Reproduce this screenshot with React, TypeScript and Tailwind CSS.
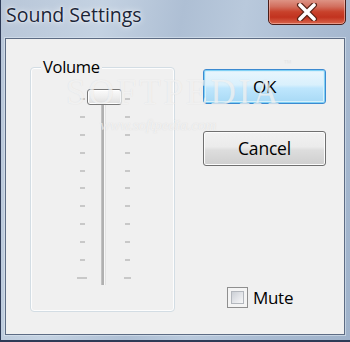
import React from 'react';

const ticks = Array.from({ length: 11 }, (_, i) => i);

function CloseButton() {
  return (
    <div className="absolute left-[267px] top-[-4px] w-[78px] h-[29px] rounded-b-[5px] border border-[#4a1e1a] bg-[linear-gradient(180deg,#e3a496_0%,#d2705f_35%,#c8412b_55%,#c2331f_75%,#d9664d_100%)] shadow-[inset_0_0_0_1px_rgba(255,220,210,0.45)] flex items-center justify-center">
      <svg width="22" height="18" viewBox="0 0 22 18" className="mt-[3px]">
        <path d="M4 2 L18 16 M18 2 L4 16" stroke="#5a2418" strokeWidth="6" strokeLinecap="round" />
        <path d="M4 2 L18 16 M18 2 L4 16" stroke="#ffffff" strokeWidth="3.6" strokeLinecap="round" />
      </svg>
    </div>
  );
}

function Slider() {
  return (
    <div className="relative flex h-[197px] ml-[46px] mt-[21px]">
      {/* left ticks */}
      <div className="flex flex-col justify-between items-center w-[10px] pt-[9px] h-[190px]">
        {ticks.map((i) => (
          <div key={i} className={`h-[2px] bg-[#c8c8c8] ${i === 10 ? 'w-[10px]' : 'w-[5px]'}`} />
        ))}
      </div>
      {/* channel */}
      <div className="ml-[14px] mt-[8px] w-[5px] h-[188px] flex">
        <div className="w-[1px] bg-[#c2c2c2]" />
        <div className="w-[2px] bg-[#b0b0b0]" />
        <div className="w-[2px] bg-[#f7f7f7] border-r border-[#e2e2e2]" />
      </div>
      {/* right ticks */}
      <div className="flex flex-col justify-between items-center w-[7px] ml-[18px] pt-[9px] h-[190px]">
        {ticks.map((i) => (
          <div key={i} className={`h-[2px] bg-[#c8c8c8] ${i === 10 ? 'w-[7px]' : 'w-[5px]'}`} />
        ))}
      </div>
      {/* thumb */}
      <div className="absolute left-[10px] top-0 w-[35px] h-[16px] rounded-[3px] border border-[#787878] bg-[linear-gradient(180deg,#fbfbfb_0%,#eeeeee_50%,#dedede_100%)] shadow-[inset_0_0_0_1px_#ffffff]" />
    </div>
  );
}

export default function App() {
  return (
    <div
      className="relative w-[350px] h-[342px] overflow-hidden bg-[linear-gradient(100deg,#b8c6d8_0%,#c4d2e2_25%,#aebfd4_45%,#b9c9dc_60%,#a9bbd2_80%,#9fb2ca_100%)] border-l border-b-2 border-[#2e3b57] flex flex-col"
      style={{ fontFamily: '"Open Sans", "Noto Sans", Arial, sans-serif' }}
    >
      {/* title bar */}
      <div className="h-[38px] flex items-start pl-[5px] pt-[1px] shrink-0">
        <span className="text-[19.5px] leading-[28px] text-[#1b2538] tracking-[0px] [text-shadow:0_0_6px_rgba(255,255,255,0.9),0_0_2px_rgba(255,255,255,0.9)]">
          Sound Settings
        </span>
      </div>
      <CloseButton />

      {/* client area */}
      <div className="relative ml-[4px] w-[340px] h-[297px] border border-[#5d6c84] shadow-[0_0_0_1px_rgba(220,230,240,0.6)] bg-[#f0f0f0] flex items-start">
        {/* group box */}
        <div className="relative ml-[24px] mt-[28px] w-[145px] h-[245px] rounded-[4px] border border-[#d3dde4] shadow-[inset_0_0_0_1px_#fdfdfd]">
          <span className="absolute left-[10px] top-[-11px] px-[2px] bg-[#f0f0f0] text-[16.5px] leading-[20px] text-black tracking-[-0.3px]">
            Volume
          </span>
          <Slider />
        </div>

        {/* buttons */}
        <div className="ml-[28px] mt-[30px] flex flex-col">
          <button className="w-[123px] h-[35px] rounded-[3px] border border-[#3c8ad0] shadow-[inset_0_0_0_1px_#7fd0f5,inset_0_0_0_2px_#d8f0fb] bg-[linear-gradient(180deg,#eaf6fd_0%,#d9f0fc_45%,#bee6fd_55%,#a7d9f5_100%)] text-[17px] text-black tracking-[-0.3px]">
            OK
          </button>
          <button className="mt-[27px] w-[123px] h-[35px] rounded-[3px] border border-[#707070] shadow-[inset_0_0_0_1px_#fcfcfc] bg-[linear-gradient(180deg,#f2f2f2_0%,#ebebeb_45%,#dddddd_55%,#cfcfcf_100%)] text-[17.5px] text-black tracking-[-0.2px]">
            Cancel
          </button>
          <label className="mt-[121px] ml-[24px] flex items-center gap-[5px]">
            <span className="w-[21px] h-[21px] border border-[#8f8f8f] bg-[#f4f4f4] p-[3px] flex">
              <span className="flex-1 border border-[#b3b7bd] bg-[linear-gradient(135deg,#cbcfd5_0%,#e2e4e8_50%,#f7f7f8_100%)]" />
            </span>
            <span className="text-[17px] leading-[21px] text-black tracking-[-0.3px]">Mute</span>
          </label>
        </div>

        {/* watermark */}
        <div className="absolute left-[60px] top-[41px] text-[35px] leading-[26px] tracking-[3px] text-white/60 [text-shadow:0_0_1px_rgba(190,190,190,0.45)] pointer-events-none" style={{ fontFamily: '"Liberation Serif", serif' }}>
          SOFTPEDIA
        </div>
        <div className="absolute left-[278px] top-[17px] text-[10px] text-[#e6e6e6] pointer-events-none">™</div>
        <div className="absolute left-[94px] top-[78px] text-[15px] leading-[16px] italic text-white/60 [text-shadow:0_0_1px_rgba(190,190,190,0.5)] pointer-events-none" style={{ fontFamily: '"Liberation Serif", serif' }}>
          www.softpedia.com
        </div>
      </div>
    </div>
  );
}
